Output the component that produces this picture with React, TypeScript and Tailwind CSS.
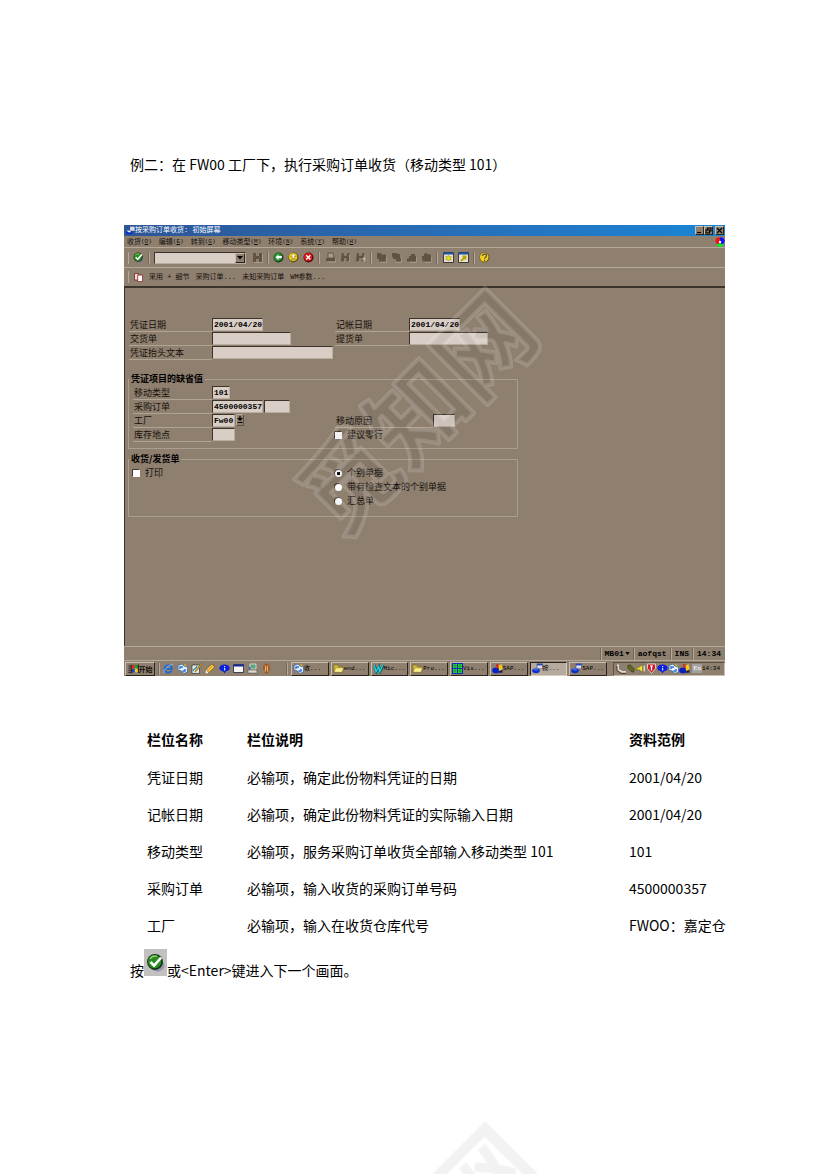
import type { ReactNode } from "react"

const MENUS = [
  ["收货", "O"],
  ["编辑", "E"],
  ["转到", "G"],
  ["移动类型", "M"],
  ["环境", "N"],
  ["系统", "Y"],
  ["帮助", "H"],
]

const FIELDS = [
  ["凭证日期", "必输项，确定此份物料凭证的日期", "2001/04/20"],
  ["记帐日期", "必输项，确定此份物料凭证的实际输入日期", "2001/04/20"],
  ["移动类型", "必输项，服务采购订单收货全部输入移动类型 101", "101"],
  ["采购订单", "必输项，输入收货的采购订单号码", "4500000357"],
  ["工厂", "必输项，输入在收货仓库代号", "FWOO：嘉定仓"],
]

function Icon({ children, className = "size-[11px]" }: { children: ReactNode; className?: string }) {
  return (
    <svg viewBox="0 0 11 11" className={`${className} shrink-0`} aria-hidden="true">
      {children}
    </svg>
  )
}

function CheckIcon({ className }: { className?: string }) {
  return (
    <Icon className={className}>
      <ellipse cx="6.5" cy="7.2" rx="4.2" ry="3.6" fill="#7d78a8" opacity="0.6" />
      <circle cx="5.2" cy="5.2" r="4.6" fill="#0c3510" />
      <circle cx="5" cy="5" r="3.9" fill="#2c8a22" />
      <path d="M2.4 3.4a3.4 3.4 0 0 1 4-1.4" stroke="#93cf6a" strokeWidth="0.8" fill="none" />
      <path d="M2.6 5.2 4.7 7.3 8.8 2.6" stroke="#fff" strokeWidth="1.5" fill="none" />
    </Icon>
  )
}

function BackIcon() {
  return (
    <Icon>
      <circle cx="5.5" cy="5.5" r="5" fill="#12451a" />
      <circle cx="5" cy="5" r="3.9" fill="#2e9238" />
      <path d="M5.5 2.5 2.5 5.2l3 2.7V6.3h3.3V4.1H5.5z" fill="#fff" />
    </Icon>
  )
}

function ExitIcon() {
  return (
    <Icon>
      <circle cx="5.5" cy="5.5" r="5" fill="#6b5708" />
      <circle cx="5.1" cy="5" r="4.1" fill="#f3cf10" />
      <path d="M5.3 1.6 2.6 4.6h1.7v2h2v-2H8zM3.5 7.4h3.8v1.3H3.5z" fill="#fff" stroke="#7c6505" strokeWidth="0.5" />
    </Icon>
  )
}

function CancelIcon() {
  return (
    <Icon>
      <circle cx="5.5" cy="5.5" r="5" fill="#5c0808" />
      <circle cx="5.1" cy="5" r="4.1" fill="#dc1719" />
      <path d="m3.2 3.2 4.2 4.2m0-4.2L3.2 7.4" stroke="#fff" strokeWidth="1.4" />
    </Icon>
  )
}

function SaveIcon() {
  return (
    <Icon>
      <path d="M2 2h9v9H2z" fill="#a99d8c" />
      <path d="M1 1h9v9H1z" fill="#5f5443" />
      <path d="M4 1h3v3H4zM4 7h3v3H4z" fill="#8e7f6f" />
    </Icon>
  )
}

function PrintIcon() {
  return (
    <Icon>
      <path d="M3 1h5l1 5H3z" fill="#a99d8c" stroke="#5f5443" strokeWidth="0.9" />
      <path d="M1 6h9v3.5H1z" fill="#5f5443" />
      <path d="M2 10h9V7" fill="none" stroke="#b9ad9d" strokeWidth="0.8" />
    </Icon>
  )
}

function FindIcon({ more }: { more?: boolean }) {
  return (
    <Icon>
      <path d="M2 3h3v7H2zm5 0h3v7H7z" fill="#b0a494" />
      <path d="M1.8 1h2v2.5H5V4h1v-.5h1.2V1h2v8.5H6.5V6h-2v3.5H1z" fill="#5f5443" />
      {more && <path d="M7 7h4M9 5v4.6" stroke="#c7bcad" strokeWidth="1" />}
    </Icon>
  )
}

function PageIcon({ d }: { d: string }) {
  return (
    <Icon>
      <path d="M4 10.3h6.3V5" fill="none" stroke="#a99d8c" />
      <path d={d} fill="#5f5443" />
    </Icon>
  )
}

function SessionIcon({ shortcut }: { shortcut?: boolean }) {
  return (
    <Icon>
      <path d="M.5.5h10v10H.5z" fill="#e6e1d2" stroke="#3d3a38" />
      <path d="M.5.5h10v2H.5z" fill="#1857a8" />
      {shortcut ? (
        <path d="M3 9 7 5M4.5 4.4h3v3" stroke="#b0a600" strokeWidth="1.8" fill="none" />
      ) : (
        <path d="m5.5 3.4.8 1.5 1.9-.5-.6 1.8.6 1.8-1.9-.4-.8 1.5-.8-1.5-1.9.4.6-1.8-.6-1.8 1.9.5z" fill="#ece01c" stroke="#8d8400" strokeWidth="0.5" />
      )}
    </Icon>
  )
}

function HelpIcon() {
  return (
    <Icon>
      <circle cx="5.5" cy="5.5" r="5" fill="#75600e" />
      <circle cx="5.2" cy="5.2" r="4.2" fill="#f1ce22" />
      <path d="M3.6 4c0-2.4 3.9-2.4 3.9-.2 0 1.5-1.9 1.4-1.9 2.9" stroke="#574d55" strokeWidth="1.2" fill="none" />
      <path d="M5 7.7h1.2v1.2H5z" fill="#574d55" />
    </Icon>
  )
}

function SapIcon() {
  return (
    <Icon>
      <path d="M5 .8h5.5v5H5z" fill="#dcd9e8" stroke="#26335f" strokeWidth="0.5" />
      <path d="M5 .8h5.5v1.6H5z" fill="#2447b8" />
      <ellipse cx="4" cy="7.8" rx="3.8" ry="2.4" fill="#0b2cc9" />
      <path d="M1 5.5h4l1.4 2H2.6z" fill="#3d6df0" />
    </Icon>
  )
}

function SapLogonIcon() {
  return (
    <Icon>
      <ellipse cx="4.2" cy="7.4" rx="4" ry="2.8" fill="#0a20c4" />
      <path d="M4 1.4 6 .8l1.2 3.4-2.6 1.3z" fill="#d7281a" />
      <path d="M6.6 2.8 9.5 1l1 5-3.5 2.4z" fill="#f2cb1d" />
      <path d="m7 8 3.5-1v2.4L7.6 10z" fill="#18223f" />
    </Icon>
  )
}

function ExchangeIcon() {
  return (
    <Icon>
      <path d="M1 2.5 5 1l2 2 3.5 1V9L7 10.5 4.5 8 1 7z" fill="#e5edf6" stroke="#2d5f9e" strokeWidth="0.7" />
      <path d="M3 6V4h3M8 6v2H5.5" stroke="#2a6fd6" strokeWidth="1.4" fill="none" />
      <path d="m7 1 3 1-2 1.6z" fill="#d9b520" />
    </Icon>
  )
}

function FolderIcon() {
  return (
    <Icon>
      <path d="M.8 2h3.6l1 1.4h3.8V9H.8z" fill="#d8bd36" stroke="#6e5b10" strokeWidth="0.5" />
      <path d="M2.6 4.8h8L9.2 9.3H1z" fill="#fbee8f" stroke="#6e5b10" strokeWidth="0.5" />
    </Icon>
  )
}

function WordIcon() {
  return (
    <Icon>
      <path d="m1.6 2 1.8 7L6 3.6 7 9l3.4-7" fill="none" stroke="#08414d" strokeWidth="2.2" />
      <path d="m1.3 1.8 1.8 7L5.8 3.4l1 5.4 3.2-7" fill="none" stroke="#1cd5dd" strokeWidth="1.4" />
    </Icon>
  )
}

function GridIcon() {
  return (
    <Icon>
      <path d="M0 0h11v11H0z" fill="#1226c4" />
      <path d="M1 1h4v4H1zm5 0h4v4H6zM1 6h4v4H1zm5 0h4v4H6z" fill="#25dc38" />
      <path d="M3 0v11M8 0v11M0 3h11M0 8h11" stroke="#0b4a2a" strokeWidth="0.4" />
    </Icon>
  )
}

function ExplorerIcon() {
  return (
    <Icon>
      <path d="M8.5 7.8A3.7 3.7 0 1 1 9 5.8H3.2" fill="none" stroke="#1d69d4" strokeWidth="1.8" />
      <path d="M.6 9.8C1 6.5 6 1.5 10.4 1" fill="none" stroke="#7fc0f5" strokeWidth="1" />
    </Icon>
  )
}

function NotepadIcon() {
  return (
    <Icon>
      <path d="M1 2h7.5v8.4H1z" fill="#f2eee4" stroke="#28343a" strokeWidth="0.7" />
      <path d="M2 8c1-3 3-2 4-5" stroke="#2492a2" strokeWidth="1.4" fill="none" />
      <path d="m10 .6-5.5 6.6-.6 1.9 1.7-1L11 1.8z" fill="#d2a322" stroke="#553d06" strokeWidth="0.4" />
    </Icon>
  )
}

function PencilIcon() {
  return (
    <Icon>
      <path d="M7.2.8 1 6.4 3.6 10l6.3-5.7z" fill="#e7a72a" stroke="#5c3a06" strokeWidth="0.5" />
      <path d="M7 2 2.4 6.3M8.6 3.6 4 8" stroke="#fbe9a2" strokeWidth="0.8" />
      <path d="m1 6.4 2.6 3.6-3 .4z" fill="#f6eee0" />
    </Icon>
  )
}

function BubbleIcon() {
  return (
    <Icon>
      <ellipse cx="5.5" cy="5" rx="5.2" ry="3.6" fill="#0a1fe0" />
      <path d="M4 8h3l-1.5 2.6z" fill="#0a1fe0" />
      <path d="M5 3h1.2v1H5zm0 1.7h1.2v2.7H5z" fill="#cfe0ff" />
    </Icon>
  )
}

function WindowIcon() {
  return (
    <Icon>
      <path d="M.5 1.5h10v8H.5z" fill="#f6f5f2" stroke="#1e2440" strokeWidth="0.8" />
      <path d="M.5 1.5h10v2H.5z" fill="#16289c" />
    </Icon>
  )
}

function MonitorIcon() {
  return (
    <Icon>
      <path d="M3 1h6v5H3z" fill="#5ba583" stroke="#dcdcd2" strokeWidth="0.9" />
      <path d="M1 7h8.5l1 3H1z" fill="#ddd9cc" stroke="#47443f" strokeWidth="0.5" />
      <path d="M1.5 3.5 4 5 2.6 7z" fill="#2556c1" />
    </Icon>
  )
}

function MaskIcon() {
  return (
    <Icon>
      <path d="M5.5.6C9 1 9.2 4 8.5 7L6.5 10.4h-2L2.4 7C1.6 4 2 1 5.5.6z" fill="#a3571d" />
      <path d="M4 2.5c1 1 .5 3 .2 6M7 2.5c-1 1-.6 3-.3 6" stroke="#f1d9b4" strokeWidth="0.9" fill="none" />
    </Icon>
  )
}

function FlagIcon() {
  return (
    <Icon>
      <path d="M3.5 2.3 6.5 1.5v3.6l-3 .7z" fill="#e0281c" />
      <path d="M7 1.5 10.2 2v3.5L7 5z" fill="#1c9a34" />
      <path d="m3.5 6.3 3-.7v3.6l-3 .6z" fill="#1c3fd4" />
      <path d="m7 5.6 3.2.5v3.4L7 9.1z" fill="#ecc91c" />
      <path d="M.5 3h2M.5 5.2h2M.5 7.4h2M.5 9.4h2M3.2 1.5v9M10.4 1.5v8.5" stroke="#17120d" strokeWidth="0.9" />
    </Icon>
  )
}

const TASKS: { icon: ReactNode; text: string; active?: boolean }[] = [
  { icon: <ExchangeIcon />, text: "收..." },
  { icon: <FolderIcon />, text: "end..." },
  { icon: <WordIcon />, text: "Mic..." },
  { icon: <FolderIcon />, text: "Pro..." },
  { icon: <GridIcon />, text: "Vis..." },
  { icon: <SapLogonIcon />, text: "SAP..." },
  { icon: <SapIcon />, text: "按...", active: true },
  { icon: <SapIcon />, text: "SAP..." },
]

function ToolButton({ label, children }: { label: string; children: ReactNode }) {
  return (
    <button type="button" aria-label={label} className="flex size-[11px] shrink-0 items-center justify-center">
      {children}
    </button>
  )
}

function Divider() {
  return <span className="h-3 w-0.5 shrink-0 border-r border-l border-r-[#b5a999] border-l-[#75685a]" />
}

function Caption({ htmlFor, children }: { htmlFor: string; children: ReactNode }) {
  return (
    <label htmlFor={htmlFor} className="h-3.5 border-b border-[#b0a494] pl-px leading-[14px] whitespace-nowrap">
      {children}
    </label>
  )
}

function Field({ id, label, value = "", width }: { id: string; label?: string; value?: string; width: string }) {
  return (
    <input
      id={id}
      aria-label={label}
      defaultValue={value}
      className={`${width} block h-[13px] border border-t-[#3c342c] border-r-[#b9ad9f] border-b-[#b9ad9f] border-l-[#3c342c] bg-[#d8cec6] pl-px font-['Liberation_Mono',monospace] text-[8px] leading-[11px] font-bold text-black outline-none`}
    />
  )
}

function Radio({ label, checked }: { label: string; checked?: boolean }) {
  return (
    <label className="flex h-3.5 items-center gap-[5px] leading-[14px] whitespace-nowrap">
      <input
        type="radio"
        name="slip"
        defaultChecked={checked}
        className="size-[7px] appearance-none rounded-full bg-white shadow-[-1px_-1px_0_#40372e] checked:bg-[radial-gradient(circle,#000_0_2px,#fff_2px)]"
      />
      {label}
    </label>
  )
}

function Tick({ label }: { label: string }) {
  return (
    <label className="flex h-3.5 items-center gap-[5px] leading-[14px] whitespace-nowrap">
      <input type="checkbox" className="size-[7px] appearance-none bg-white shadow-[-1px_-1px_0_#40372e] checked:bg-black" />
      {label}
    </label>
  )
}

function TitleButton({ label, d }: { label: string; d: string }) {
  return (
    <button
      type="button"
      aria-label={label}
      className="flex h-[9px] w-[9px] items-center justify-center border border-t-[#c9bfb2] border-r-[#2a241d] border-b-[#2a241d] border-l-[#c9bfb2] bg-[#8e7f6f]"
    >
      <svg viewBox="0 0 7 7" className="size-[7px] shrink-0" aria-hidden="true">
        <path d={d} fill="none" stroke="#000" strokeWidth="1.1" />
      </svg>
    </button>
  )
}

function Watermark({ className }: { className: string }) {
  return (
    <svg
      viewBox="0 0 300 300"
      className={`${className} pointer-events-none absolute left-1/2 size-[300px] -translate-x-1/2 select-none`}
      aria-hidden="true"
    >
      <text
        x="148"
        y="148"
        textAnchor="middle"
        dominantBaseline="central"
        strokeLinejoin="round"
        transform="rotate(-45 148 148)"
        className="fill-black/5 stroke-white/15 stroke-[4px] font-['Noto_Sans_CJK_SC',sans-serif] text-[96px] font-bold"
      >
        觅知网
      </text>
    </svg>
  )
}

function SapWindow() {
  return (
    <section className="bg-[#8e7f6f] font-['Noto_Sans_CJK_SC',sans-serif] text-[9px] text-[#15100b]">
      <header className="flex h-[11px] items-center bg-gradient-to-r from-[#2c5596] to-[#1885d6] pr-px pl-0.5 text-white">
        <Icon className="size-[9px]">
          <path d="M5 .8h5.5v5H5z" fill="#dcd9e8" />
          <ellipse cx="4" cy="7.8" rx="3.8" ry="2.4" fill="#0b2cc9" />
          <path d="M1 5.5h4l1.4 2H2.6z" fill="#e8ecff" />
        </Icon>
        <h2 className="flex-1 font-['Liberation_Mono','Noto_Sans_CJK_SC',monospace] text-[7px] leading-[11px]">按采购订单收货: 初始屏幕</h2>
        <TitleButton label="最小化" d="M1 5.5h4" />
        <TitleButton label="还原" d="M2.5 2.5v-1.5h3.5v3h-1.5M1 3h3.5v3H1z" />
        <span className="w-0.5" />
        <TitleButton label="关闭" d="m1 1 5 5M6 1 1 6" />
      </header>

      <nav className="flex h-3 items-center gap-[7px] border-b border-[#b5a999] pl-[3px] text-[7px] leading-[11px]">
        {MENUS.map(([name, key]) => (
          <button type="button" key={name} className="flex items-center whitespace-nowrap">
            {name}
            <span className="font-['Liberation_Mono',monospace] text-[6px]">
              (<u>{key}</u>)
            </span>
          </button>
        ))}
        <span className="flex-1" />
        <Icon className="size-[10px]">
          <circle cx="5.5" cy="7.3" r="3.4" fill="#00f020" />
          <path d="M5.5 6.5V.5a4 4 0 0 0-4 6.5c1.3 1 3 .6 4-.5z" fill="#f01010" />
          <path d="M5.5 6.5V.5a4 4 0 0 1 4 6.5c-1.3 1-3 .6-4-.5z" fill="#1010f0" />
          <circle cx="5.5" cy="5.5" r="1.3" fill="#fff" />
        </Icon>
      </nav>

      <div className="flex h-5 items-center gap-1 border-b border-[#b5a999] pl-1">
        <span className="h-3 w-px bg-[#b5a999]" />
        <ToolButton label="回车"><CheckIcon /></ToolButton>
        <Divider />
        <div className="relative h-3 w-[92px] border border-t-[#3c342c] border-r-[#b9ad9f] border-b-[#b9ad9f] border-l-[#3c342c] bg-[#d8cec6]">
          <select aria-label="命令" className="block size-full appearance-none bg-transparent text-[8px] outline-none">
            <option></option>
          </select>
          <span className="pointer-events-none absolute inset-y-0 right-0 flex w-2.5 items-center justify-center border border-t-[#c9bfb2] border-r-[#2a241d] border-b-[#2a241d] border-l-[#c9bfb2] bg-[#8e7f6f]">
            <svg viewBox="0 0 6 4" className="h-1 w-1.5"><path d="M0 0h6L3 3.5z" /></svg>
          </span>
        </div>
        <div className="flex items-center gap-1 pl-0.5">
          <ToolButton label="保存"><SaveIcon /></ToolButton>
          <Divider />
          <ToolButton label="返回"><BackIcon /></ToolButton>
          <ToolButton label="退出"><ExitIcon /></ToolButton>
          <ToolButton label="取消"><CancelIcon /></ToolButton>
        </div>
        <Divider />
        <div className="flex items-center gap-1 pl-px">
          <ToolButton label="打印"><PrintIcon /></ToolButton>
          <ToolButton label="查找"><FindIcon /></ToolButton>
          <ToolButton label="继续查找"><FindIcon more /></ToolButton>
        </div>
        <Divider />
        <div className="flex items-center gap-1">
          <ToolButton label="首页"><PageIcon d="M1 1h4v1.5h5v7H3V7H1z" /></ToolButton>
          <ToolButton label="上一页"><PageIcon d="M1 1h5v1h3v4h1v3.5H5V7H2V5H1z" /></ToolButton>
          <ToolButton label="下一页"><PageIcon d="M5 2h4v2h1v5.5H1v-3h2V4h2z" /></ToolButton>
          <ToolButton label="末页"><PageIcon d="M3 1.5h4v1h3v7H1.5V7H1V4h2z" /></ToolButton>
        </div>
        <Divider />
        <div className="flex items-center gap-1 pl-px">
          <ToolButton label="新建会话"><SessionIcon /></ToolButton>
          <ToolButton label="快捷方式"><SessionIcon shortcut /></ToolButton>
        </div>
        <Divider />
        <ToolButton label="帮助"><HelpIcon /></ToolButton>
      </div>

      <div className="flex h-[18px] items-center gap-1 pl-1 font-['Liberation_Mono','Noto_Sans_CJK_SC',monospace] text-[7px] leading-[14px]">
        <span className="h-3 w-px bg-[#b5a999]" />
        <ToolButton label="复制">
          <Icon className="size-[9px]">
            <path d="M.6.6h5v8h-5z" fill="#e9e0dc" stroke="#7c1d18" strokeWidth="1" />
            <path d="M4.5 2.5h6v8h-6z" fill="#fff" stroke="#8c2520" strokeWidth="1" />
          </Icon>
        </ToolButton>
        <div className="flex gap-1.5 pl-px whitespace-nowrap">
          <button type="button">采用 + 细节</button>
          <button type="button">采购订单...</button>
          <button type="button">未知采购订单</button>
          <button type="button">WM参数...</button>
        </div>
      </div>

      <form className="border-t-2 border-l border-[#3c352d] pt-[30px] pb-[129px] pl-[3px]" onSubmit={(e) => e.preventDefault()}>
        <div className="grid auto-rows-[14px] grid-cols-[83px_123px_74px_1fr] pl-px">
          <Caption htmlFor="doc-date">凭证日期</Caption>
          <Field id="doc-date" value="2001/04/20" width="w-[51px]" />
          <Caption htmlFor="post-date">记帐日期</Caption>
          <Field id="post-date" value="2001/04/20" width="w-[51px]" />
          <Caption htmlFor="delivery">交货单</Caption>
          <Field id="delivery" width="w-[79px]" />
          <Caption htmlFor="lading">提货单</Caption>
          <Field id="lading" width="w-[79px]" />
          <Caption htmlFor="header-text">凭证抬头文本</Caption>
          <Field id="header-text" width="w-[121px]" />
        </div>

        <fieldset className="mt-3 max-w-[390px] border border-[#aa9e8e] pb-1.5 pl-1">
          <legend className="-ml-1 px-0.5 leading-[14px] font-bold text-black">凭证项目的缺省值</legend>
          <div className="grid auto-rows-[14px] grid-cols-[79px_123px_98px_1fr]">
            <Caption htmlFor="move-type">移动类型</Caption>
            <div className="col-span-3">
              <Field id="move-type" value="101" width="w-[18px]" />
            </div>
            <Caption htmlFor="order">采购订单</Caption>
            <div className="col-span-3 flex gap-px">
              <Field id="order" value="4500000357" width="w-[51px]" />
              <Field id="order-item" label="订单项目" width="w-[26px]" />
            </div>
            <Caption htmlFor="plant">工厂</Caption>
            <div className="flex gap-px">
              <Field id="plant" value="Fw00" width="w-[23px]" />
              <button type="button" aria-label="选择工厂" className="flex h-3 w-2 items-center justify-center border border-t-[#b5a999] border-r-[#5d5143] border-b-[#5d5143] border-l-[#b5a999]">
                <svg viewBox="0 0 6 8" className="h-2 w-1.5 shrink-0"><path d="M2.4 0h1.2v2H6L3 5 0 2h2.4zM.5 6h5v1h-5z" /></svg>
              </button>
            </div>
            <Caption htmlFor="reason">移动原因</Caption>
            <Field id="reason" width="w-[22px]" />
            <Caption htmlFor="storage">库存地点</Caption>
            <Field id="storage" width="w-[23px]" />
            <Tick label="建议零行" />
          </div>
        </fieldset>

        <fieldset className="mt-[3px] max-w-[390px] border border-[#aa9e8e] pb-2 pl-1">
          <legend className="-ml-1 px-0.5 leading-[14px] font-bold text-black">收货/发货单</legend>
          <div className="grid grid-cols-[202px_1fr]">
            <Tick label="打印" />
            <div>
              <Radio label="个别单据" checked />
              <Radio label="带有检查文本的个别单据" />
              <Radio label="汇总单" />
            </div>
          </div>
        </fieldset>
      </form>

      <div className="flex h-3.5 items-center justify-end gap-[3px] border-t border-[#b5a999] pr-1 font-['Liberation_Mono',monospace] text-[8px] font-bold text-black">
        <Divider />
        <button type="button" className="flex items-center gap-px">
          MB01
          <svg viewBox="0 0 6 4" className="h-[3px] w-[5px]"><path d="M0 0h6L3 4z" /></svg>
        </button>
        <Divider />
        <span>aofqst</span>
        <Divider />
        <span>INS</span>
        <Divider />
        <span>14:34</span>
      </div>

      <footer className="flex h-4 items-center border-t border-[#b5a999] pl-px text-[7px] leading-[12px]">
        <button type="button" className="flex h-3.5 w-[30px] items-center justify-center border border-t-[#c9bfb2] border-r-[#2a241d] border-b-[#2a241d] border-l-[#c9bfb2] font-bold whitespace-nowrap">
          <FlagIcon />
          开始
        </button>
        <div className="ml-[3px] flex w-[128px] items-center gap-[3px]">
          <Divider />
          <ExplorerIcon />
          <ExchangeIcon />
          <NotepadIcon />
          <PencilIcon />
          <BubbleIcon />
          <WindowIcon />
          <MonitorIcon />
          <MaskIcon />
        </div>
        <Divider />
        <div className="ml-[3px] flex min-w-0 flex-1 gap-0.5">
          {TASKS.map((task, i) => (
            <button
              type="button"
              key={i}
              className={
                task.active
                  ? "flex h-3.5 min-w-0 flex-1 items-center overflow-hidden border border-t-[#2a241d] border-r-[#d9d0c5] border-b-[#d9d0c5] border-l-[#2a241d] bg-[#b5aa9d] pl-px whitespace-nowrap"
                  : "flex h-3.5 min-w-0 flex-1 items-center overflow-hidden border border-t-[#c9bfb2] border-r-[#2a241d] border-b-[#2a241d] border-l-[#c9bfb2] pl-px whitespace-nowrap"
              }
            >
              {task.icon}
              <span className="font-['Liberation_Mono','Noto_Sans_CJK_SC',monospace] text-[6px] text-black">{task.text}</span>
            </button>
          ))}
        </div>
        <div className="ml-1.5 flex h-3.5 w-[112px] items-center border border-t-[#5d5143] border-r-[#c9bfb2] border-b-[#c9bfb2] border-l-[#5d5143] pl-0.5">
          <Icon>
            <path d="M2 1.5v5l4 2.5h4" fill="none" stroke="#dedbd2" strokeWidth="2" />
            <path d="M1 3v4.5l4 2.8h5" fill="none" stroke="#27221d" strokeWidth="0.8" />
          </Icon>
          <Icon className="size-[9px]">
            <path d="M1 2 4 1l5 5-1 4-3-1-4-4z" fill="#5e6a22" stroke="#2c310c" strokeWidth="0.7" />
          </Icon>
          <Icon className="size-[9px]">
            <path d="M1 4h3l4-3.5v10L4 7H1z" fill="#f0e234" stroke="#57500c" strokeWidth="0.6" />
            <path d="M10 2v7" stroke="#fff" strokeWidth="1.2" />
          </Icon>
          <span className="w-0.5" />
          <Icon>
            <path d="M1.5 1h8v4.5l-4 5-4-5z" fill="#c5202a" stroke="#f3e5e0" strokeWidth="0.8" />
            <path d="M4 3h3M5.5 3v4.5" stroke="#fff" strokeWidth="1.2" />
          </Icon>
          <BubbleIcon />
          <ExchangeIcon />
          <SapLogonIcon />
          <span className="ml-0.5 bg-[#a3a29f] px-px font-['Liberation_Serif',serif] text-[7px] leading-[9px] text-white">En</span>
          <time className="ml-auto pr-1 font-['Liberation_Mono',monospace] text-[6px] text-black">14:34</time>
        </div>
      </footer>
    </section>
  )
}

export default function App() {
  return (
    <main className="relative min-h-screen overflow-hidden bg-white pt-[152px] pr-[105px] pl-[124px] font-['Noto_Sans_CJK_SC',sans-serif] text-sm leading-6 text-black">
      <h1 className="mb-[49px] pl-1.5">例二：在 FW00 工厂下，执行采购订单收货（移动类型 101）</h1>

      <SapWindow />

      <table className="mt-11 ml-[23px] border-collapse text-left whitespace-nowrap">
        <thead>
          <tr className="h-[38px]">
            <th className="min-w-[100px] p-0 font-bold">栏位名称</th>
            <th className="min-w-[382px] p-0 font-bold">栏位说明</th>
            <th className="p-0 font-bold">资料范例</th>
          </tr>
        </thead>
        <tbody>
          {FIELDS.map(([name, note, sample]) => (
            <tr key={name} className="h-[37px]">
              <td className="p-0">{name}</td>
              <td className="p-0">{note}</td>
              <td className="p-0">{sample}</td>
            </tr>
          ))}
        </tbody>
      </table>

      <p className="mt-1.5 flex items-end pl-1.5">
        按
        <span className="mb-1.5 flex h-[27px] w-[23px] items-center justify-center bg-[#c3c1bf]">
          <CheckIcon className="size-[19px]" />
        </span>
        或&lt;Enter&gt;键进入下一个画面。
      </p>

      <Watermark className="top-[261px]" />
      <Watermark className="top-[1094px]" />
    </main>
  )
}
